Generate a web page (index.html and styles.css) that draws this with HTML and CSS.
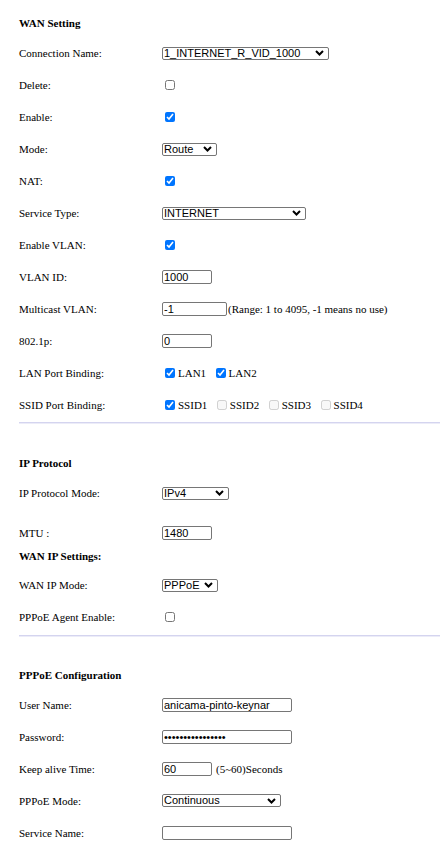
FILE: index.html
```html
<!DOCTYPE html>
<html>
<head>
<meta charset="utf-8">
<link rel="stylesheet" href="styles.css">
</head>
<body>
<div class="page">
  <section class="sec">
    <div class="title first">WAN Setting</div>
    <div class="row"><span class="lbl">Connection Name:</span><div class="ctl"><select class="sel w167"><option>1_INTERNET_R_VID_1000</option></select></div></div>
    <div class="row"><span class="lbl">Delete:</span><div class="ctl"><input type="checkbox" class="cb"></div></div>
    <div class="row"><span class="lbl">Enable:</span><div class="ctl"><input type="checkbox" class="cb" checked></div></div>
    <div class="row"><span class="lbl">Mode:</span><div class="ctl"><select class="sel w55"><option>Route</option></select></div></div>
    <div class="row"><span class="lbl">NAT:</span><div class="ctl"><input type="checkbox" class="cb" checked></div></div>
    <div class="row"><span class="lbl">Service Type:</span><div class="ctl"><select class="sel w144"><option>INTERNET</option></select></div></div>
    <div class="row"><span class="lbl">Enable VLAN:</span><div class="ctl"><input type="checkbox" class="cb" checked></div></div>
    <div class="row"><span class="lbl">VLAN ID:</span><div class="ctl"><input type="text" class="txt w50" value="1000"></div></div>
    <div class="row"><span class="lbl">Multicast VLAN:</span><div class="ctl"><input type="text" class="txt w65" value="-1"><span class="note">(Range: 1 to 4095, -1 means no use)</span></div></div>
    <div class="row"><span class="lbl">802.1p:</span><div class="ctl"><input type="text" class="txt w50" value="0"></div></div>
    <div class="row"><span class="lbl">LAN Port Binding:</span><div class="ctl group">
      <label class="item"><input type="checkbox" class="cb" checked>LAN1</label>
      <label class="item"><input type="checkbox" class="cb" checked>LAN2</label>
    </div></div>
    <div class="row"><span class="lbl">SSID Port Binding:</span><div class="ctl group">
      <label class="item"><input type="checkbox" class="cb" checked>SSID1</label>
      <label class="item"><input type="checkbox" class="cb" disabled>SSID2</label>
      <label class="item"><input type="checkbox" class="cb" disabled>SSID3</label>
      <label class="item"><input type="checkbox" class="cb" disabled>SSID4</label>
    </div></div>
  </section>
  <div class="sep"></div>
  <section class="sec">
    <div class="title">IP Protocol</div>
    <div class="row"><span class="lbl">IP Protocol Mode:</span><div class="ctl"><select class="sel w67"><option>IPv4</option></select></div></div>
    <div class="row mtu"><span class="lbl">MTU :</span><div class="ctl"><input type="text" class="txt w50" value="1480"></div></div>
    <div class="subtitle">WAN IP Settings:</div>
    <div class="row"><span class="lbl">WAN IP Mode:</span><div class="ctl"><select class="sel w56"><option>PPPoE</option></select></div></div>
    <div class="row"><span class="lbl">PPPoE Agent Enable:</span><div class="ctl"><input type="checkbox" class="cb"></div></div>
  </section>
  <div class="sep second"></div>
  <section class="sec">
    <div class="title cfg">PPPoE Configuration</div>
    <div class="row"><span class="lbl">User Name:</span><div class="ctl"><input type="text" class="txt w130" value="anicama-pinto-keynar"></div></div>
    <div class="row"><span class="lbl">Password:</span><div class="ctl"><input type="password" class="txt w130" value="abcdefghijklmnop"></div></div>
    <div class="row"><span class="lbl">Keep alive Time:</span><div class="ctl"><input type="text" class="txt w50" value="60"><span class="note gap">(5~60)Seconds</span></div></div>
    <div class="row"><span class="lbl">PPPoE Mode:</span><div class="ctl"><select class="sel w119"><option>Continuous</option></select></div></div>
    <div class="row"><span class="lbl">Service Name:</span><div class="ctl"><input type="text" class="txt w130" value=""></div></div>
  </section>
</div>
</body>
</html>
```

FILE: styles.css
```css
html, body {
  margin: 0;
  padding: 0;
  background: #ffffff;
}

.page {
  padding-top: 8px;
  font-family: "Liberation Serif", "Times New Roman", serif;
  font-size: 11px;
  color: #000000;
}

.title {
  height: 28px;
  margin-top: 25px;
  padding-left: 19px;
  display: flex;
  align-items: center;
  font-weight: bold;
}

.title.first {
  height: 29px;
  margin-top: 0;
}

.title.cfg {
  height: 27.5px;
  margin-top: 24px;
}

.subtitle {
  height: 15px;
  margin-bottom: 5.5px;
  padding-left: 19px;
  display: flex;
  align-items: center;
  font-weight: bold;
}

.row {
  height: 32px;
  padding-left: 19px;
  display: grid;
  grid-template-columns: 143px 1fr;
  align-items: center;
}

.row.mtu {
  margin-top: 7.5px;
}

.lbl {
  white-space: nowrap;
}

.ctl {
  display: flex;
  align-items: center;
  white-space: nowrap;
}

.group {
  gap: 6.5px;
}

.item {
  display: flex;
  align-items: center;
}

.cb {
  width: 10px;
  height: 10px;
  margin: 0 3px 0 3px;
}

.sel {
  -webkit-appearance: none;
  appearance: none;
  font-family: "Liberation Sans", Arial, sans-serif;
  font-size: 11px;
  line-height: 11px;
  height: 13px;
  padding: 0 16px 0 1px;
  border: 1px solid #767676;
  border-radius: 2px;
  background-color: #ffffff;
  background-image: url("data:image/svg+xml,%3Csvg xmlns='http://www.w3.org/2000/svg' viewBox='0 0 9 6'%3E%3Cpath d='M1 1 L4.5 4.5 L8 1' fill='none' stroke='black' stroke-width='2'/%3E%3C/svg%3E");
  background-repeat: no-repeat;
  background-position: right 4px center;
  background-size: 9px 6px;
  color: #000000;
  box-sizing: border-box;
}

.txt {
  font-family: "Liberation Sans", Arial, sans-serif;
  font-size: 11px;
  height: 14px;
  padding: 0 1px;
  border: 1px solid #767676;
  border-radius: 2px;
  box-sizing: border-box;
  color: #000000;
  background: #ffffff;
}

.note {
  margin-left: 1px;
}

.note.gap {
  margin-left: 4px;
}

.w50 { width: 50px; }
.w55 { width: 55px; }
.w56 { width: 56px; }
.w65 { width: 65px; }
.w67 { width: 67px; }
.w119 { width: 119px; }
.w130 { width: 130px; }
.w144 { width: 144px; }
.w167 { width: 167px; }

.sep {
  margin-top: 1px;
  margin-left: 19px;
  height: 1px;
  background: #d4d4ef;
  border-bottom: 1px solid #ececf8;
}

.sep.second {
  margin-top: 2px;
}
```
